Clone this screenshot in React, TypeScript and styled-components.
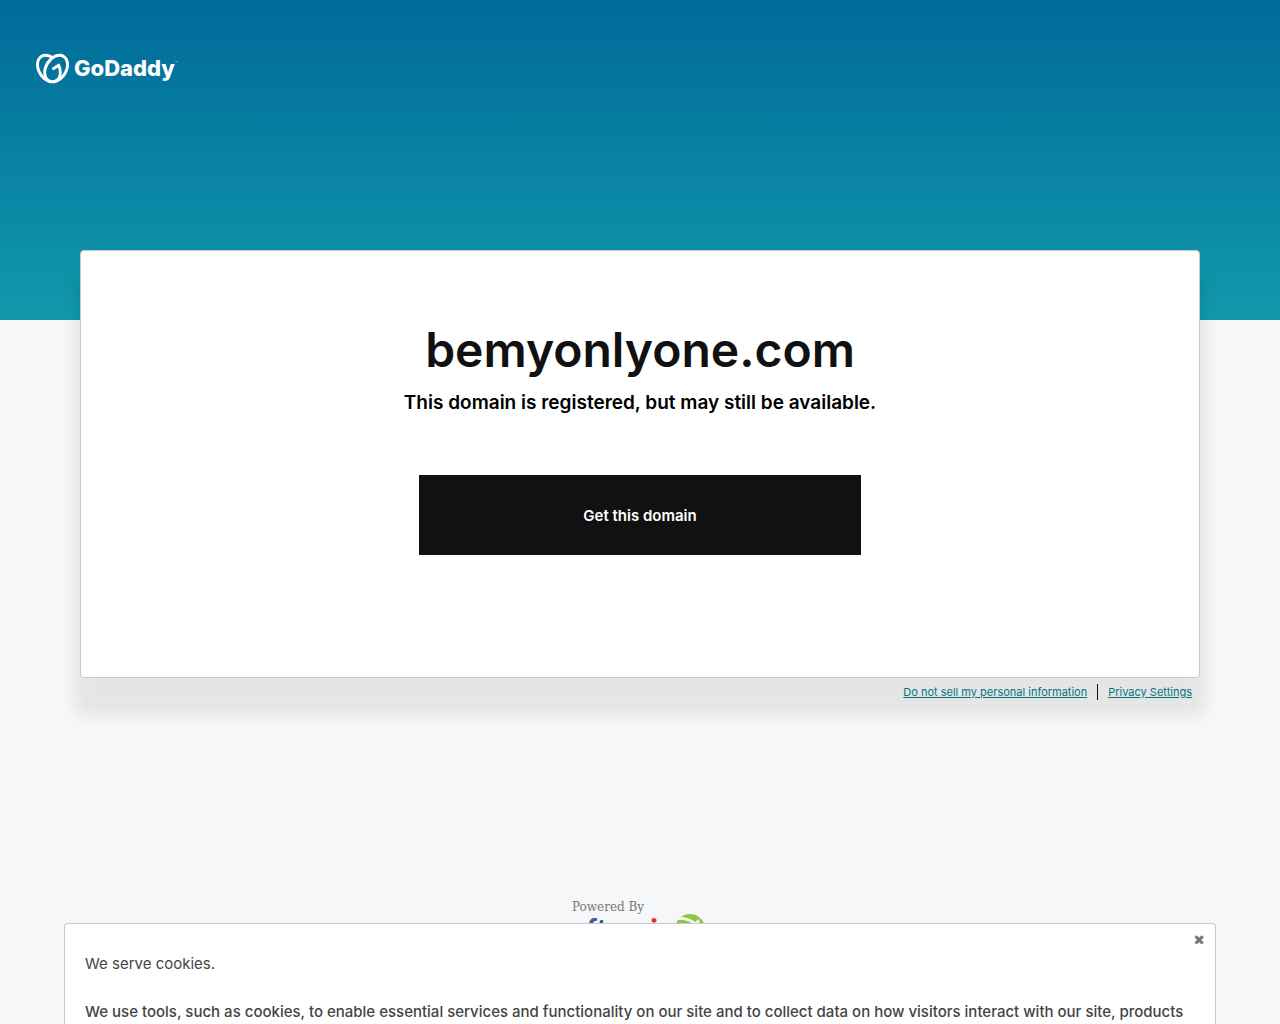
import React, { useState } from "react";
import styled, { createGlobalStyle } from "styled-components";
import { SiGodaddy } from "react-icons/si";

const GlobalStyle = createGlobalStyle`
  *, *::before, *::after { box-sizing: border-box; }
  body {
    margin: 0;
    overflow: hidden;
    background: #f5f7f8;
    color: #111;
    font-family: Inter, "Liberation Sans", sans-serif;
    font-size: 16px;
    line-height: 24px;
  }
`;

const Page = styled.div`
  min-height: 100vh;
  background: linear-gradient(#006a9a, #1199ab) top / 100% 320px no-repeat #f5f7f9;
`;

const Header = styled.header`
  height: 250px;
  padding: 48px 36px;
`;

const Brand = styled.a`
  display: inline-flex;
  align-items: center;
  gap: 5px;
  height: 40px;
  color: #fff;
  font-size: 22px;
  font-weight: 800;
  text-decoration: none;
`;

const TradeMark = styled.small`
  align-self: flex-start;
  margin-left: -5px;
  padding-top: 3px;
  font-size: 4px;
  font-weight: 400;
  opacity: 0.8;
`;

const Main = styled.main`
  margin: 0 80px;
`;

const Card = styled.section`
  display: flex;
  flex-direction: column;
  align-items: center;
  padding: 64px 32px 122px;
  border: 1px solid #c5c8cd;
  border-radius: 4px;
  background: #fff;
  box-shadow: 0 32px 14px 6px rgba(0, 0, 0, 0.07);
  text-align: center;
`;

const Domain = styled.h1`
  margin: 0;
  font-size: 48px;
  font-weight: 600;
  line-height: 70px;
`;

const Availability = styled.h2`
  margin: 0;
  padding-top: 2px;
  color: #000;
  font-size: 19px;
  font-weight: 600;
  line-height: 32px;
`;

const GetButton = styled.button`
  width: 442px;
  max-width: 100%;
  height: 80px;
  margin-top: 56px;
  padding: 2px 0 0;
  border: 0;
  background: #111;
  color: #fff;
  font: inherit;
  font-size: 15px;
  font-weight: 600;
`;

const LinkBar = styled.nav`
  display: flex;
  position: relative;
  justify-content: flex-end;
  align-items: center;
  gap: 10px;
  padding: 2px 8px;
`;

const SmallLink = styled.a`
  color: #09757a;
  font-size: 11px;
`;

const Divider = styled.span`
  width: 1px;
  height: 16px;
  background: #111;
`;

const Powered = styled.footer`
  display: flex;
  flex-direction: column;
  width: 136px;
  margin: 194px auto 0;
  color: #777;
  font-family: "DejaVu Serif", serif;
  font-size: 12px;
  line-height: 14px;
`;

const Cookies = styled.aside`
  position: fixed;
  right: 64px;
  bottom: 0;
  left: 64px;
  padding: 28px 20px 0;
  border: 1px solid #c5c8cd;
  border-bottom: 0;
  border-radius: 4px 4px 0 0;
  background: #fff;
  color: #444;
`;

const CookieTitle = styled.p`
  margin: 0 0 24px;
  font-size: 15px;
`;

const CookieText = styled.p`
  margin: 0;
  font-size: 15px;
  font-weight: 500;
`;

const Close = styled.button`
  position: absolute;
  top: 8px;
  right: 8px;
  display: flex;
  align-items: center;
  justify-content: center;
  width: 16px;
  height: 16px;
  padding: 0;
  border: 0;
  background: none;
  color: #777;
  font-family: "DejaVu Sans", sans-serif;
  font-size: 14px;
  line-height: 16px;
`;

function AfternicLogo() {
  return (
    <svg width="136" height="36" viewBox="0 0 136 36" role="img" aria-label="Afternic">
      <text x="0" y="25" fontFamily="Lato, sans-serif" fontWeight="900" fontSize="29" fill="#4257a0">
        aftern<tspan fill="#dc3545">i</tspan>c
      </text>
      <circle cx="118" cy="15" r="15" fill="#8dc63f" />
      <path d="M104 6l4-3q9 0 15 5l4-3 1 8-9-1 2-2q-7-5-17-4z" fill="#f5f7f9" />
    </svg>
  );
}

export default function App() {
  const [showCookies, setShowCookies] = useState(true);
  return (
    <Page>
      <GlobalStyle />
      <Header>
        <Brand href="#">
          <SiGodaddy size={33} aria-hidden="true" />
          <span>GoDaddy</span>
          <TradeMark>™</TradeMark>
        </Brand>
      </Header>
      <Main>
        <Card>
          <Domain>bemyonlyone.com</Domain>
          <Availability>This domain is registered, but may still be available.</Availability>
          <GetButton type="button">Get this domain</GetButton>
        </Card>
        <LinkBar aria-label="Privacy">
          <SmallLink href="#">Do not sell my personal information</SmallLink>
          <Divider />
          <SmallLink href="#">Privacy Settings</SmallLink>
        </LinkBar>
      </Main>
      <Powered>
        <span>Powered By</span>
        <AfternicLogo />
      </Powered>
      {showCookies && (
        <Cookies aria-label="Cookie notice">
          <Close type="button" aria-label="Close" onClick={() => setShowCookies(false)}>✖</Close>
          <CookieTitle>We serve cookies.</CookieTitle>
          <CookieText>
            We use tools, such as cookies, to enable essential services and functionality on our site and to collect data on how visitors interact with our site, products
          </CookieText>
        </Cookies>
      )}
    </Page>
  );
}
